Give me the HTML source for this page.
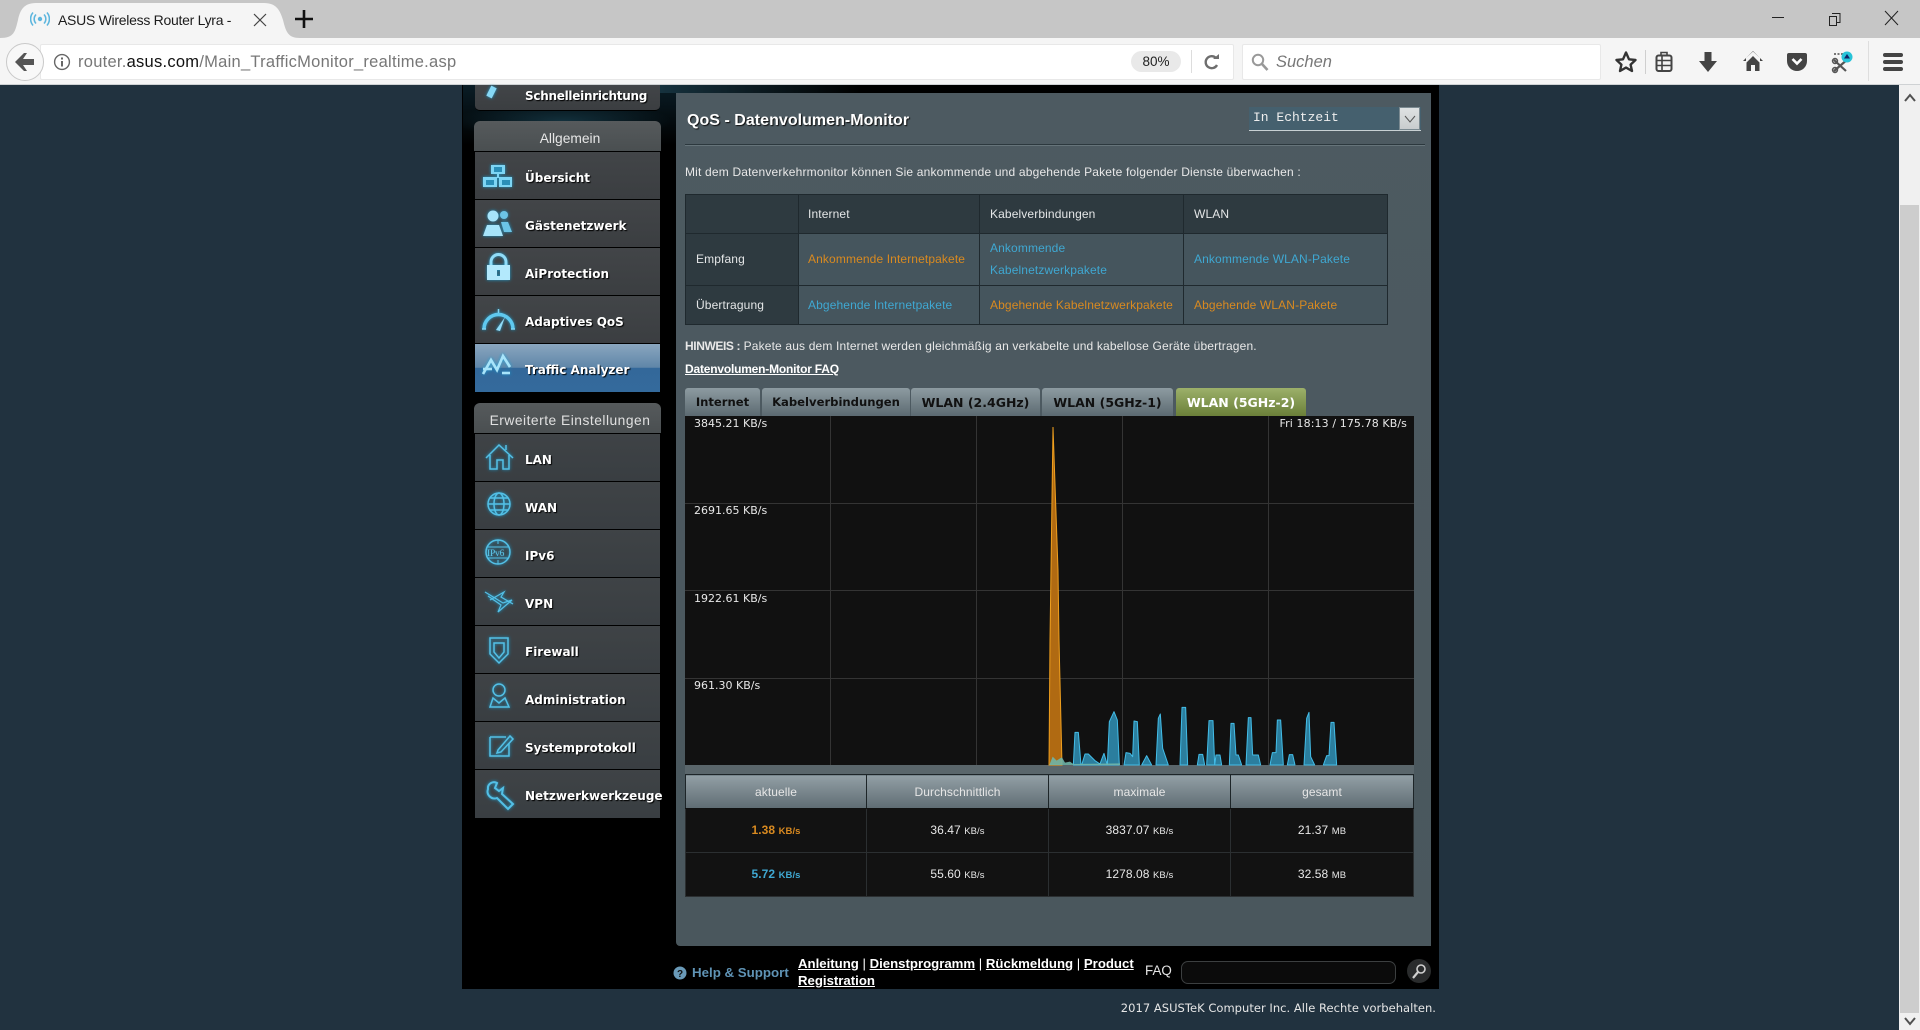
<!DOCTYPE html>
<html lang="de"><head><meta charset="utf-8"><title>ASUS Wireless Router Lyra - Traffic Analyzer</title>
<style>
html,body{margin:0;padding:0;width:1920px;height:1030px;overflow:hidden;background:#21323f;font-family:"Liberation Sans",sans-serif}
.a{position:absolute}
.t{position:absolute;white-space:nowrap;line-height:20px;height:20px}
#tabs{left:0;top:0;width:1920px;height:38px;background:#c6c6c6}
#bar{left:0;top:38px;width:1920px;height:46px;background:#f5f5f5;border-bottom:1px solid #cfd2d4}
#wrap{left:462px;top:85px;width:977px;height:904px;background:#000}
.nav{position:absolute;left:475px;width:185px;height:47px;background:linear-gradient(#424548,#3b3e41);border-bottom:1px solid #000}
.nav2{background:linear-gradient(#3f4346,#393e42)}
.nl{position:absolute;left:50px;top:16px;font:bold 12px/20px "DejaVu Sans",sans-serif;color:#fff;text-shadow:1px 1px 1px #000;white-space:nowrap}
.hd{position:absolute;left:474px;width:182px;padding-left:5px;height:30px;border-radius:6px 6px 0 0;background:linear-gradient(#565a5c,#4a4f51);color:#e6e6e6;text-align:center;font-size:13.8px;line-height:35px}
#panel{left:676px;top:93px;width:755px;height:853px;background:linear-gradient(#4d5a61,#4a575d);border-radius:0 0 0 4px}
table{border-collapse:collapse;table-layout:fixed}
#qt{left:685px;top:194px;width:702px;font-size:12px;color:#e4e6e7;letter-spacing:.12px}
#qt td{border:1px solid #1f292e;padding:0 0 0 10px;background:#45555d;line-height:22px}
#qt tr+tr+tr td,#qt tr:first-child td{padding-bottom:0}
#qt tr:nth-child(2) td{padding-bottom:2px}
#qt td:first-child+td{padding-left:9px}
#qt .d{background:#2e3a40}
.o{color:#d98a20}.b{color:#3fa8d2}
.tb{position:absolute;top:388px;height:28px;background:linear-gradient(#8d9ba1,#5c6a71);border-radius:3px 3px 0 0;color:#111;text-align:center;font:bold 12.5px/29px "DejaVu Sans",sans-serif;white-space:nowrap}
.gl{position:absolute;font:11px/14px "DejaVu Sans",sans-serif;color:#e8e8e8;white-space:nowrap}
#st{left:685px;top:774px;width:728px;color:#e8e8e8;font-size:12px;letter-spacing:.08px}
#st th,#st td{padding:0;box-sizing:border-box}
#st th{font-weight:normal;background:linear-gradient(#929fa5,#5f6c73);border:1px solid #1d2528;border-bottom-color:#111;color:#e6e6e6}
#st td{background:#121212;text-align:center;border:1px solid #2b2f31;padding-bottom:2px}
#st small{font-size:9.5px}
a{color:#fff;text-decoration:underline}
</style></head><body>

<div class="a" id="tabs"></div>
<svg class="a" style="left:0;top:0" width="320" height="40"><path d="M0 38C14 38 15 32 18 20 20 10 24 3 36 3H264C276 3 280 10 283 20 286 32 288 38 300 38Z" fill="#f5f5f5"/></svg>
<svg class="a" style="left:30px;top:10px" width="20" height="18" fill="none" stroke="#5db6de" stroke-width="1.6"><circle cx="10" cy="9" r="2.2" fill="#5db6de" stroke="none"/><path d="M6 4.5a6.5 6.5 0 0 0 0 9M14 4.5a6.5 6.5 0 0 1 0 9M3 2.5a10 10 0 0 0 0 13M17 2.5a10 10 0 0 1 0 13"/></svg>
<div class="t" style="left:58px;top:10px;font-size:14px;color:#1c1c1c;letter-spacing:-.28px">ASUS Wireless Router Lyra -</div>
<svg class="a" style="left:253px;top:13px" width="14" height="14" stroke="#444" stroke-width="1.2"><path d="M1 1 13 13M13 1 1 13"/></svg>
<svg class="a" style="left:295px;top:10px" width="18" height="18" stroke="#111" stroke-width="2.6"><path d="M9 0V18M0 9H18"/></svg>
<svg class="a" style="left:1770px;top:10px" width="130" height="16" fill="none" stroke="#222" stroke-width="1"><path d="M2 7.5H14"/><path d="M62 3.5H70V12.5H67M59.5 6.5H66.5V15.5H59.5Z"/><path d="M115 1 128 15M128 1 115 15"/></svg>

<div class="a" id="bar"></div>
<div class="a" style="left:40px;top:44px;width:1192px;height:34px;background:#fff;border:1px solid #e8e8e8;border-radius:2px"></div>
<div class="a" style="left:6px;top:43px;width:36px;height:36px;border-radius:50%;background:#f8f8f8;border:1px solid #c9c9c9"></div>
<svg class="a" style="left:15px;top:53px" width="20" height="18" fill="#555"><path d="M0 9 9 0H12L8 6H19V12H8L12 18H9Z"/></svg>
<svg class="a" style="left:53px;top:53px" width="18" height="18" fill="none" stroke="#666" stroke-width="1.4"><circle cx="9" cy="9" r="7.4"/><path d="M9 8V13.5" stroke-width="2"/><path d="M9 4.5V6.5" stroke-width="2"/></svg>
<div class="t" style="left:78px;top:52px;font-size:16.5px;color:#777;letter-spacing:.26px">router.<span style="color:#111">asus.com</span>/Main_TrafficMonitor_realtime.asp</div>
<div class="a" style="left:1131px;top:51px;width:50px;height:21px;border-radius:11px;background:#e9e9e9;text-align:center;font-size:13.5px;line-height:21px;color:#222">80%</div>
<div class="a" style="left:1191px;top:50px;width:1px;height:23px;background:#ddd"></div>
<svg class="a" style="left:1204px;top:53px" width="16" height="18" fill="none" stroke="#6e6e6e" stroke-width="2.4"><path d="M12 5A6 6 0 1 0 13 12"/><path d="M9 6H15V1Z" fill="#6e6e6e" stroke="none"/></svg>
<div class="a" style="left:1242px;top:44px;width:357px;height:34px;background:#fff;border:1px solid #e8e8e8;border-radius:2px"></div>
<svg class="a" style="left:1251px;top:53px" width="18" height="18" fill="none" stroke="#999" stroke-width="2"><circle cx="7" cy="7" r="5.2"/><path d="M11 11 16.5 17" stroke-width="2.6"/></svg>
<div class="t" style="left:1276px;top:52px;font-size:16.5px;font-style:italic;color:#777">Suchen</div>
<svg class="a" style="left:1615px;top:50px" width="22" height="23" fill="none" stroke="#333" stroke-width="2.4" stroke-linejoin="round"><path d="M11 2.5 14 9.3 20.5 10 15.6 14.6 17 21 11 17.6 5 21 6.4 14.6 1.5 10 8 9.3Z"/></svg>
<div class="a" style="left:1645px;top:50px;width:1px;height:24px;background:#cfcfcf"></div>
<svg class="a" style="left:1655px;top:51px" width="18" height="22" fill="none" stroke="#444" stroke-width="2"><rect x="1.5" y="4.5" width="15" height="15.5" rx="2"/><path d="M6 4V1.5H12V4M1.5 9.5H16.5M1.5 14.5H16.5M7 5V20" stroke-width="1.6"/></svg>
<svg class="a" style="left:1699px;top:51px" width="18" height="22" fill="#444"><path d="M5.5 1H12.5V10H18L9 21 0 10H5.5Z"/></svg>
<svg class="a" style="left:1743px;top:50px" width="20" height="22" fill="#444"><path d="M10 1 20 11H17V8L10 1.5 3 8V11H0ZM10 6 16.5 12.500V21H12V15H8V21H3.500V12.500Z"/></svg>
<svg class="a" style="left:1787px;top:52px" width="20" height="20"><path d="M2 1H18Q20 1 20 3V9A10 10 0 0 1 0 9V3Q0 1 2 1Z" fill="#444"/><path d="M5.500 7 10 11.500 14.500 7" fill="none" stroke="#fff" stroke-width="2.600"/></svg>
<svg class="a" style="left:1831px;top:50px" width="22" height="24"><path d="M3 21 17 9M3 10 15 21" stroke="#555" stroke-width="2.200"/><circle cx="4" cy="11" r="2.400" fill="none" stroke="#555" stroke-width="1.600"/><circle cx="4" cy="20" r="2.400" fill="none" stroke="#555" stroke-width="1.600"/><path d="M3 4H14" stroke="#777" stroke-width="2" stroke-dasharray="2 1.500"/><circle cx="16" cy="7" r="5.500" fill="#27c3d8"/><path d="M13 8.500 16 4 19 8.500Z" fill="#126"/></svg>
<div class="a" style="left:1868px;top:41px;width:1px;height:40px;background:#dedede"></div>
<svg class="a" style="left:1883px;top:52px" width="20" height="20" fill="#444"><rect y="1" width="20" height="4" rx="2"/><rect y="8" width="20" height="4" rx="2"/><rect y="15" width="20" height="4" rx="2"/></svg>

<div class="a" style="left:1899px;top:85px;width:21px;height:945px;background:#f0f0f0"></div>
<svg class="a" style="left:1904px;top:93px" width="12" height="9" fill="none" stroke="#505050" stroke-width="2"><path d="M1 8 6 2 11 8"/></svg>
<div class="a" style="left:1900px;top:205px;width:19px;height:808px;background:#cdcdcd"></div>
<svg class="a" style="left:1904px;top:1017px" width="12" height="9" fill="none" stroke="#505050" stroke-width="2"><path d="M1 1 6 7 11 1"/></svg>

<div class="a" id="wrap"></div>
<div class="a" style="left:463px;top:85px;width:214px;height:60px;background:radial-gradient(ellipse 120px 22px at 100px 36px,#12303c,rgba(0,0,0,0) 90%),linear-gradient(#0a1d26,#000)"></div>
<div class="a" style="left:660px;top:85px;width:200px;height:8px;background:linear-gradient(90deg,#16323e,#000)"></div>

<!-- sidebar -->
<div class="nav" style="top:85px;height:25px;border-radius:0 0 5px 5px"><div class="nl" style="top:1px;letter-spacing:-.28px">Schnelleinrichtung</div></div>
<div class="hd" style="top:121px">Allgemein</div>
<div class="nav" style="top:152px"><div class="nl" style="top:15.500px">Übersicht</div></div>
<div class="nav" style="top:200px"><div class="nl" style="top:15.500px">Gästenetzwerk</div></div>
<div class="nav" style="top:248px"><div class="nl" style="top:15.500px">AiProtection</div></div>
<div class="nav" style="top:296px"><div class="nl" style="top:15.500px">Adaptives QoS</div></div>
<div class="nav" style="top:344px;height:48px;border:0;background:linear-gradient(#8aa6bf,#5f86a8 49%,#33689a 50%,#346a9c)"><div class="nl" style="top:15.500px">Traffic Analyzer</div></div>
<div class="hd" style="top:403px;letter-spacing:.5px;color:#e0e0e0">Erweiterte Einstellungen</div>
<div class="nav nav2" style="top:434px"><div class="nl">LAN</div></div>
<div class="nav nav2" style="top:482px"><div class="nl">WAN</div></div>
<div class="nav nav2" style="top:530px"><div class="nl">IPv6</div></div>
<div class="nav nav2" style="top:578px"><div class="nl">VPN</div></div>
<div class="nav nav2" style="top:626px"><div class="nl">Firewall</div></div>
<div class="nav nav2" style="top:674px"><div class="nl">Administration</div></div>
<div class="nav nav2" style="top:722px"><div class="nl">Systemprotokoll</div></div>
<div class="nav nav2" style="top:770px;height:48px;border:0"><div class="nl">Netzwerkwerkzeuge</div></div>

<!-- sidebar icons -->
<svg class="a" style="left:0;top:0;overflow:visible" width="680" height="830">
<defs><filter id="g" x="-40%" y="-40%" width="180%" height="180%"><feGaussianBlur stdDeviation="1.600" result="b"/><feFlood flood-color="#1aa6dc" flood-opacity=".9"/><feComposite in2="b" operator="in"/><feMerge><feMergeNode/><feMergeNode in="SourceGraphic"/></feMerge></filter></defs>
<g filter="url(#g)">
<path d="M489 97 494 87" stroke="#86d8f5" stroke-width="6" fill="none"/>
<path d="M494 167H502V172H494ZM486 180H494V185H486ZM502 180H510V185H502Z" fill="#2b8fb8"/>
<g fill="#7dd5f4" stroke="none"><path d="M491 165H505V174H499V177H512V187H499V178H497V187H483V177H497V174H491ZM494 167V172H502V167ZM486 180V185H494V180ZM502 180V185H510V180Z" fill-rule="evenodd"/></g>
<g fill="#a7e4fa"><circle cx="504" cy="215" r="4" fill="#6cc4e6"/><path d="M501 222H508L512 232H504Z" fill="#6cc4e6"/><circle cx="493" cy="216" r="5.500"/><path d="M483 236 487 225H499L503 236Z"/></g>
<path d="M491 265V262A7.500 7.500 0 0 1 506 262V265" fill="none" stroke="#8fdcf8" stroke-width="3"/><path d="M487 265H510V280H487ZM497 270V276H500V270Z" fill="#b3e9fc" fill-rule="evenodd"/>
<path d="M484 329A14.500 14.500 0 0 1 513 329" fill="none" stroke="#5fc9ef" stroke-width="3.500"/><path d="M482 329H486M511 329H515M498.500 309V313" stroke="#7dd5f4" stroke-width="1.500"/><path d="M496 330 505 317 500 331Z" fill="#8fdcf8"/>
<path d="M483 374 491 360 497 370 503 356 510 367M483 369H492M502 373H510" fill="none" stroke="#a7e4fa" stroke-width="2.600"/>
<g fill="none" stroke="#52c0e6" stroke-width="1.500">
<path d="M486 458 499 445 513 458M490 455V469H497V460H503V469H509V455M506 445V450"/>
<circle cx="499" cy="504" r="11"/><ellipse cx="499" cy="504" rx="5" ry="11"/><path d="M488 504H510M490 498H508M490 510H508"/>
<circle cx="498" cy="552" r="12"/><path d="M487 547H509M487 558H509M498 540V544M498 560V564" stroke-width="1"/>
<path d="M485 592 503 603 512 600 498 612 501 605 488 596M490 600 504 592 501 597 513 604" stroke-width="1.200"/>
<path d="M490 638H508V654L499 663 490 654ZM494 643H504V652L499 658 494 652Z"/>
<circle cx="499" cy="690" r="6"/><path d="M490 707 493 698 499 703 505 698 509 707Z"/>
<path d="M490 737H506M490 737V756H509V743"/><path d="M498 750 510 736 513 739 501 752 497 753Z"/>
<path d="M488 789A6 6 0 0 1 497 783L495 788 499 791 503 788 502 794 513 804 508 809 497 798A7 7 0 0 1 488 789Z" stroke-width="2"/>
</g>
<text x="487" y="556" font-family="Liberation Serif,serif" font-size="9.500" fill="#5cc8ec" letter-spacing="-.2">IPv6</text>
</g></svg>

<!-- main panel -->
<div class="a" id="panel"></div>
<div class="t" style="left:687px;top:111px;font-size:16px;font-weight:bold;color:#fff;text-shadow:1px 1px 1px #111;letter-spacing:.03px">QoS - Datenvolumen-Monitor</div>
<div class="a" style="left:1249px;top:107px;width:172px;height:23px;background:#45606e;border-bottom:1px solid #c8d0d3"></div>
<div class="t" style="left:1253px;top:108px;font:13px/20px 'Liberation Mono',monospace;color:#eee">In Echtzeit</div>
<div class="a" style="left:1399px;top:107px;width:21px;height:23px;background:linear-gradient(#dfe2e3,#c8ccce);border:1px solid #7b8a91;box-sizing:border-box"></div>
<svg class="a" style="left:1404px;top:114px" width="12" height="9" fill="none" stroke="#555"><path d="M1 2 6 8 11 2"/></svg>
<div class="a" style="left:685px;top:144px;width:740px;height:1px;background:#2c383e;border-bottom:1px solid #66747a"></div>
<div class="t" style="left:685px;top:162px;font-size:12px;color:#e8e8e8;letter-spacing:.18px">Mit dem Datenverkehrmonitor können Sie ankommende und abgehende Pakete folgender Dienste überwachen :</div>

<table class="a" id="qt">
<colgroup><col style="width:113px"><col style="width:181px"><col style="width:204px"><col style="width:204px"></colgroup>
<tr style="height:39px"><td class="d"></td><td class="d">Internet</td><td class="d">Kabelverbindungen</td><td class="d">WLAN</td></tr>
<tr style="height:52px"><td class="d">Empfang</td><td class="o">Ankommende Internetpakete</td><td class="b">Ankommende<br>Kabelnetzwerkpakete</td><td class="b">Ankommende WLAN-Pakete</td></tr>
<tr style="height:39px"><td class="d">Übertragung</td><td class="b">Abgehende Internetpakete</td><td class="o">Abgehende Kabelnetzwerkpakete</td><td class="o">Abgehende WLAN-Pakete</td></tr>
</table>

<div class="t" style="left:685px;top:336px;font-size:12px;color:#e8e8e8;letter-spacing:.16px"><b style="letter-spacing:-.4px">HINWEIS :</b> Pakete aus dem Internet werden gleichmäßig an verkabelte und kabellose Geräte übertragen.</div>
<div class="t" style="left:685px;top:359px;font-size:12px;font-weight:bold;color:#fff;text-decoration:underline;letter-spacing:-.2px">Datenvolumen-Monitor FAQ</div>

<div class="tb" style="left:685px;width:75px;font-size:11.6px">Internet</div>
<div class="tb" style="left:762px;width:148px;font-size:11.6px">Kabelverbindungen</div>
<div class="tb" style="left:911px;width:129px">WLAN (2.4GHz)</div>
<div class="tb" style="left:1042px;width:131px">WLAN (5GHz-1)</div>
<div class="tb" style="left:1176px;width:130px;background:linear-gradient(#9cb06a,#6b8039);color:#fff">WLAN (5GHz-2)</div>

<!-- graph -->
<div class="a" style="left:685px;top:416px;width:729px;height:358px;background:#5a666b"></div>
<svg class="a" style="left:0;top:0" width="1500" height="800">
<rect x="685" y="416" width="729" height="349" fill="#111"/>
<path d="M830.500 416V765M976.500 416V765M1122.500 416V765M1268.500 416V765M685 503.500H1414M685 590.500H1414M685 678.500H1414" stroke="#343434" fill="none"/>
<path d="M1053 427 1058 570 1059 640 1062 765H1049L1050 640Z" fill="#b06a12" stroke="#ef9f1e" stroke-width="1"/>
<g transform="translate(1020 640) scale(.33333)">
<path fill="#2f8db2" fill-opacity=".88" stroke="#43bde8" stroke-width="3" stroke-linejoin="round" d="M160 375 165 277H175L183 375ZM185 375 195 342H205L225 362 240 372 245 358 252 340 262 375ZM262 375 268 245 282 215 292 240 298 375ZM312 375 318 338 330 340 338 350 342 243 352 245 358 375ZM365 375 380 347 395 375ZM408 375 415 235 421 222 428 325 445 375ZM480 375 486 202H497L503 375ZM532 375 537 343H548L554 375ZM560 375 567 242H579L584 375 588 345H600L605 375ZM628 375 633 250H642L648 345H655L665 375ZM678 375 685 233H693L698 345H715L722 375ZM750 375 757 338H768L772 240H782L790 375ZM802 375 808 344H818L825 375ZM852 375 860 235 867 217 872 350 884 375ZM910 375 920 347H927L933 247H942L950 375Z"/>
<path fill="#6fb5a8" fill-opacity=".9" d="M88 375 98 350 110 362 120 355 126 352 135 368 150 365 160 372 300 370V375Z"/>
</g>
</svg>
<div class="gl" style="left:694px;top:417px">3845.21 KB/s</div>
<div class="gl" style="left:694px;top:504px">2691.65 KB/s</div>
<div class="gl" style="left:694px;top:592px">1922.61 KB/s</div>
<div class="gl" style="left:694px;top:679px">961.30 KB/s</div>
<div class="gl" style="right:513px;top:417px;left:auto;letter-spacing:.1px">Fri 18:13 / 175.78 KB/s</div>

<table class="a" id="st">
<colgroup><col style="width:181px"><col style="width:182px"><col style="width:182px"><col style="width:183px"></colgroup>
<tr style="height:34px"><th>aktuelle</th><th>Durchschnittlich</th><th>maximale</th><th>gesamt</th></tr>
<tr style="height:44px"><td><b class="o">1.38 <small>KB/s</small></b></td><td>36.47 <small>KB/s</small></td><td>3837.07 <small>KB/s</small></td><td>21.37 <small>MB</small></td></tr>
<tr style="height:44px"><td><b class="b">5.72 <small>KB/s</small></b></td><td>55.60 <small>KB/s</small></td><td>1278.08 <small>KB/s</small></td><td>32.58 <small>MB</small></td></tr>
</table>

<!-- footer -->
<svg class="a" style="left:673px;top:966px" width="14" height="14"><circle cx="7" cy="7" r="6.500" fill="#6a9ab8"/><text x="7" y="11" text-anchor="middle" font-family="Liberation Sans,sans-serif" font-size="10" font-weight="bold" fill="#111">?</text></svg>
<div class="t" style="left:692px;top:963px;font-size:13.3px;font-weight:bold;color:#5f93b5">Help &amp; Support</div>
<div class="a" style="left:798px;top:956px;width:345px;white-space:nowrap;font:bold 13.2px/16.500px 'Liberation Sans',sans-serif;color:#fff"><a>Anleitung</a> <span style="font-weight:normal">|</span> <a>Dienstprogramm</a> <span style="font-weight:normal">|</span> <a>Rückmeldung</a> <span style="font-weight:normal">|</span> <a>Product<br>Registration</a></div>
<div class="t" style="left:1145px;top:961px;font-size:13.4px;color:#e4e4e4">FAQ</div>
<div class="a" style="left:1181px;top:961px;width:215px;height:23px;box-sizing:border-box;background:#0b0b0b;border:1px solid #3c3f40;border-radius:7px"></div>
<svg class="a" style="left:1407px;top:959px" width="24" height="24"><circle cx="12" cy="12" r="12" fill="#2a2c2d"/><circle cx="14" cy="10" r="4" fill="none" stroke="#cfcfcf" stroke-width="1.600"/><path d="M11 13 6 19" stroke="#cfcfcf" stroke-width="2.200"/></svg>
<div class="t" style="right:484px;top:998px;font:11.5px/20px 'DejaVu Sans',sans-serif;color:#e6e6e6;letter-spacing:.03px">2017 ASUSTeK Computer Inc. Alle Rechte vorbehalten.</div>
</body></html>
